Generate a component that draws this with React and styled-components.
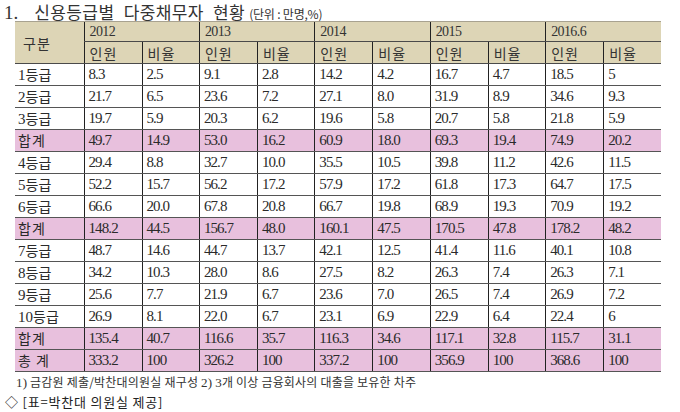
import styled, { createGlobalStyle } from 'styled-components';

const GlobalStyle = createGlobalStyle`
  html, body {
    margin: 0;
    padding: 0;
    background: #fff;
  }
  body {
    font-family: "Liberation Serif", "Noto Sans CJK KR", serif;
    color: #2a2a2a;
  }
`;

const Page = styled.div`
  width: 680px;
  padding: 3px 0 0 4px;
  box-sizing: border-box;
`;

const Title = styled.h1`
  margin: 0;
  height: 18px;
  font-family: "Noto Sans CJK KR", sans-serif;
  font-size: 17px;
  font-weight: 400;
  line-height: 18px;
  color: #333;
  white-space: nowrap;
`;

const Num = styled.span`
  font-family: "Liberation Serif", serif;
  font-size: 19px;
  margin-right: 16px;
`;

const Words = styled.span`
  word-spacing: 5px;
  letter-spacing: 0.4px;
`;

const Unit = styled.span`
  margin-left: 4px;
  font-size: 12px;
  letter-spacing: -0.2px;
`;

const Table = styled.table`
  margin-left: 11px;
  width: 646px;
  border-collapse: collapse;
  table-layout: fixed;
  font-size: 14px;
`;

const HeadRow = styled.tr`
  height: ${({ $h }) => $h}px;
`;

const Head = styled.th`
  background: #ddd5b6;
  padding: 0 0 0 ${({ $pad }) => $pad || 5}px;
  text-align: left;
  font-weight: 400;
  font-family: ${({ $kr }) => ($kr ? '"Noto Sans CJK KR", sans-serif' : '"Liberation Serif", serif')};
  font-size: 14px;
  letter-spacing: ${({ $kr }) => ($kr ? '1px' : '-0.6px')};
  border-top: 1px solid #a8a290;
  border-bottom: 1px solid #4a4a4a;
  border-left: ${({ $first }) => ($first ? 'none' : '1px solid #222')};
  border-right: none;
  vertical-align: middle;
  line-height: 1;
  color: #333;
`;

const Row = styled.tr`
  height: 22px;
  background: ${({ $total }) => ($total ? '#e8c0dd' : '#fff')};
`;

const Label = styled.td`
  padding: 0 0 0 3px;
  border-bottom: 1px solid #555;
  font-family: "Liberation Serif", "Noto Sans CJK KR", serif;
  font-size: 15px;
  letter-spacing: ${({ $total }) => ($total ? '1px' : '0')};
  line-height: 1;
  vertical-align: middle;
  white-space: nowrap;
  & > span {
    font-family: "Noto Sans CJK KR", sans-serif;
    font-size: 14px;
    line-height: 1;
  }
`;

const Cell = styled.td`
  padding: 0 0 0 4px;
  border-left: 1px solid #222;
  border-bottom: 1px solid #555;
  font-family: "Liberation Serif", serif;
  font-size: 15px;
  letter-spacing: -0.9px;
  line-height: 1;
  vertical-align: middle;
  white-space: nowrap;
`;

const Note = styled.p`
  margin: 2px 0 0 12px;
  font-family: "Noto Sans CJK KR", sans-serif;
  font-size: 12px;
  line-height: 16px;
  color: #333;
  letter-spacing: 0.2px;
  white-space: nowrap;
  & > em {
    font-style: normal;
    font-family: "Liberation Serif", serif;
    font-size: 13px;
  }
`;

const Source = styled.p`
  margin: 2px 0 0 1px;
  font-family: "Noto Sans CJK KR", sans-serif;
  font-size: 13px;
  line-height: 17px;
  color: #222;
  letter-spacing: 0.8px;
`;

const YEARS = ['2012', '2013', '2014', '2015', '2016.6'];

const ROWS = [
  { n: '1', label: '등급', v: ['8.3', '2.5', '9.1', '2.8', '14.2', '4.2', '16.7', '4.7', '18.5', '5'] },
  { n: '2', label: '등급', v: ['21.7', '6.5', '23.6', '7.2', '27.1', '8.0', '31.9', '8.9', '34.6', '9.3'] },
  { n: '3', label: '등급', v: ['19.7', '5.9', '20.3', '6.2', '19.6', '5.8', '20.7', '5.8', '21.8', '5.9'] },
  { label: '합계', total: true, v: ['49.7', '14.9', '53.0', '16.2', '60.9', '18.0', '69.3', '19.4', '74.9', '20.2'] },
  { n: '4', label: '등급', v: ['29.4', '8.8', '32.7', '10.0', '35.5', '10.5', '39.8', '11.2', '42.6', '11.5'] },
  { n: '5', label: '등급', v: ['52.2', '15.7', '56.2', '17.2', '57.9', '17.2', '61.8', '17.3', '64.7', '17.5'] },
  { n: '6', label: '등급', v: ['66.6', '20.0', '67.8', '20.8', '66.7', '19.8', '68.9', '19.3', '70.9', '19.2'] },
  { label: '합계', total: true, v: ['148.2', '44.5', '156.7', '48.0', '160.1', '47.5', '170.5', '47.8', '178.2', '48.2'] },
  { n: '7', label: '등급', v: ['48.7', '14.6', '44.7', '13.7', '42.1', '12.5', '41.4', '11.6', '40.1', '10.8'] },
  { n: '8', label: '등급', v: ['34.2', '10.3', '28.0', '8.6', '27.5', '8.2', '26.3', '7.4', '26.3', '7.1'] },
  { n: '9', label: '등급', v: ['25.6', '7.7', '21.9', '6.7', '23.6', '7.0', '26.5', '7.4', '26.9', '7.2'] },
  { n: '10', label: '등급', v: ['26.9', '8.1', '22.0', '6.7', '23.1', '6.9', '22.9', '6.4', '22.4', '6'] },
  { label: '합계', total: true, v: ['135.4', '40.7', '116.6', '35.7', '116.3', '34.6', '117.1', '32.8', '115.7', '31.1'] },
  { label: '총 계', total: true, v: ['333.2', '100', '326.2', '100', '337.2', '100', '356.9', '100', '368.6', '100'] },
];

export default function App() {
  return (
    <Page>
      <GlobalStyle />
      <Title>
        <Num>1.</Num>
        <Words>신용등급별 다중채무자 현황</Words>
        <Unit>(단위 : 만명,%)</Unit>
      </Title>

      <Table>
        <colgroup>
          <col style={{ width: 69 }} />
          {YEARS.map((y) => [
            <col key={y + 'a'} style={{ width: 58 }} />,
            <col key={y + 'b'} style={{ width: 57.4 }} />,
          ])}
        </colgroup>
        <thead>
          <HeadRow $h={20}>
            <Head $first $kr $pad={8} rowSpan={2}>구분</Head>
            {YEARS.map((y) => (
              <Head key={y} colSpan={2}>{y}</Head>
            ))}
          </HeadRow>
          <HeadRow $h={22}>
            {YEARS.map((y) => [
              <Head key={y + 'p'} $kr>인원</Head>,
              <Head key={y + 'r'} $kr>비율</Head>,
            ])}
          </HeadRow>
        </thead>
        <tbody>
          {ROWS.map((r, i) => (
            <Row key={i} $total={r.total}>
              <Label $total={r.total}>
                {r.n}
                <span>{r.label}</span>
              </Label>
              {r.v.map((v, j) => (
                <Cell key={j}>{v}</Cell>
              ))}
            </Row>
          ))}
        </tbody>
      </Table>

      <Note>
        <em>1)</em> 금감원 제출/박찬대의원실 재구성 <em>2)</em> <em>3</em>개 이상 금융회사의 대출을 보유한 차주
      </Note>
      <Source>◇ [표=박찬대 의원실 제공]</Source>
    </Page>
  );
}
